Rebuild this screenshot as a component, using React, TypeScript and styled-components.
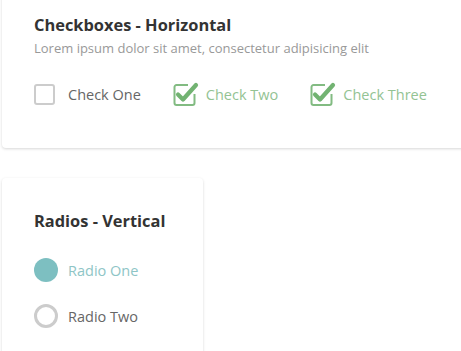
import React from 'react';
import styled, { createGlobalStyle } from 'styled-components';

const GlobalStyle = createGlobalStyle`
  html, body {
    margin: 0;
    padding: 0;
    background: #ffffff;
    overflow: hidden;
  }
  body {
    font-family: "Open Sans", "Noto Sans", Arial, sans-serif;
  }
`;

const Page = styled.div`
  display: flex;
  flex-direction: column;
  align-items: flex-start;
  gap: 30px;
  padding-left: 2px;
  margin-top: -12px;
`;

const Card = styled.div<{ wide?: boolean }>`
  box-sizing: border-box;
  width: ${props => props.wide ? '500px' : '201px'};
  background: #fff;
  border-radius: 4px;
  box-shadow: 0 1px 3px rgba(0, 0, 0, 0.16);
  padding: ${props => props.wide ? '26px 32px 43px' : '32px 32px 40px'};
`;

const Title = styled.h3`
  margin: 0;
  font-size: 16.4px;
  font-weight: 700;
  color: #333;
  line-height: 22px;
`;

const Subtitle = styled.p`
  margin: 3px 0 0;
  font-size: 13px;
  color: #999;
  line-height: 18px;
`;

const CheckRow = styled.div`
  display: flex;
  align-items: center;
  gap: 31px;
  margin-top: 27px;
`;

const RadioList = styled.div`
  display: flex;
  flex-direction: column;
  gap: 22px;
  margin-top: 26px;
`;

const Option = styled.label<{ active?: boolean; tone?: string; gap?: number }>`
  display: flex;
  align-items: center;
  gap: ${props => props.gap ?? 12}px;
  font-size: 14.5px;
  color: ${props => props.active ? props.tone : '#666'};
  cursor: pointer;
`;

const EmptyBox = styled.span`
  box-sizing: border-box;
  width: 21px;
  height: 21px;
  border: 2px solid #ccc;
  border-radius: 3px;
  margin-right: 1px;
`;

const TickWrap = styled.span`
  display: inline-flex;
  width: 22px;
  height: 21px;
  position: relative;
`;

const TickSvg = styled.svg`
  position: absolute;
  left: 0;
  top: -3px;
`;

const Radio = styled.span<{ checked?: boolean }>`
  box-sizing: border-box;
  width: 24px;
  height: 24px;
  border-radius: 50%;
  background: ${props => props.checked ? '#7dbfc1' : '#fff'};
  border: ${props => props.checked ? 'none' : '3px solid #ccc'};
`;

const Tick = () => (
  <TickWrap>
    <TickSvg width="28" height="26" viewBox="0 0 28 26">
      <path
        d="M16 4H4.5A2 2 0 0 0 2.5 6v16a2 2 0 0 0 2 2h16a2 2 0 0 0 2-2v-9"
        fill="none"
        stroke="#82bb82"
        strokeWidth="2"
      />
      <path
        d="M6 13.5l5 5L24 4"
        fill="none"
        stroke="#72b372"
        strokeWidth="4.2"
        strokeLinecap="round"
        strokeLinejoin="round"
      />
    </TickSvg>
  </TickWrap>
);

const checks = [
  { label: 'Check One', checked: false },
  { label: 'Check Two', checked: true },
  { label: 'Check Three', checked: true },
];

const radios = [
  { label: 'Radio One', checked: true },
  { label: 'Radio Two', checked: false },
];

export default function App() {
  return (
    <>
      <GlobalStyle />
      <Page>
        <Card wide>
          <Title>Checkboxes - Horizontal</Title>
          <Subtitle>Lorem ipsum dolor sit amet, consectetur adipisicing elit</Subtitle>
          <CheckRow>
            {checks.map(c => (
              <Option key={c.label} active={c.checked} tone="#93c393">
                {c.checked ? <Tick /> : <EmptyBox />}
                {c.label}
              </Option>
            ))}
          </CheckRow>
        </Card>
        <Card>
          <Title>Radios - Vertical</Title>
          <RadioList>
            {radios.map(r => (
              <Option key={r.label} active={r.checked} tone="#8ec5c6" gap={10}>
                <Radio checked={r.checked} />
                {r.label}
              </Option>
            ))}
          </RadioList>
        </Card>
      </Page>
    </>
  );
}
